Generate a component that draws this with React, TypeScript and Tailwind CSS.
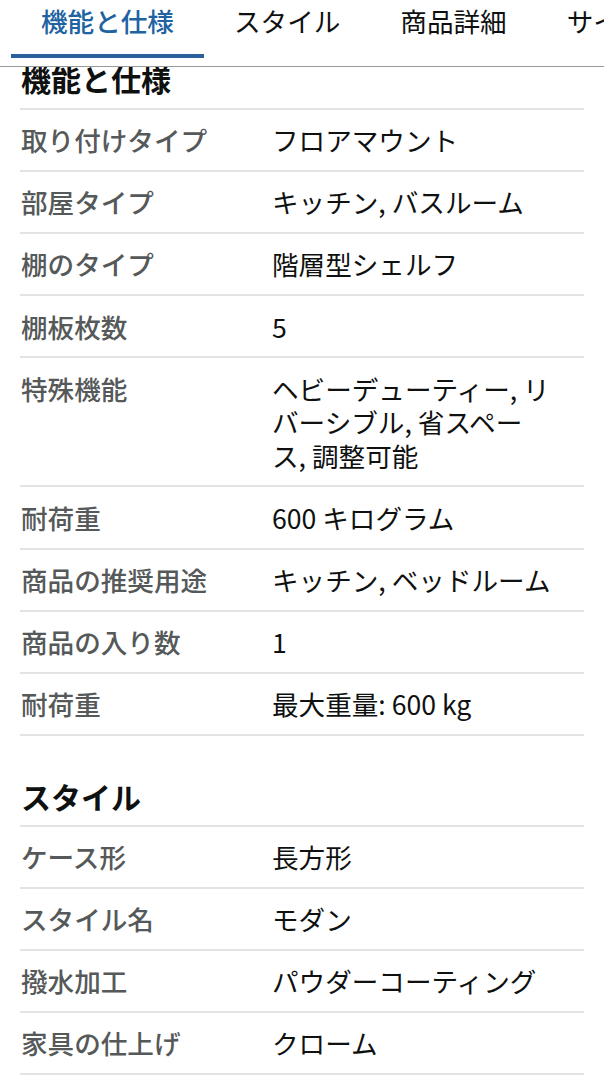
import React from "react";

const tabs = ["機能と仕様", "スタイル", "商品詳細", "サイズ"];

const specs: [string, string][] = [
  ["取り付けタイプ", "フロアマウント"],
  ["部屋タイプ", "キッチン, バスルーム"],
  ["棚のタイプ", "階層型シェルフ"],
  ["棚板枚数", "5"],
  ["特殊機能", "ヘビーデューティー, リバーシブル, 省スペース, 調整可能"],
  ["耐荷重", "600 キログラム"],
  ["商品の推奨用途", "キッチン, ベッドルーム"],
  ["商品の入り数", "1"],
  ["耐荷重", "最大重量: 600 kg"],
];

const style: [string, string][] = [
  ["ケース形", "長方形"],
  ["スタイル名", "モダン"],
  ["撥水加工", "パウダーコーティング"],
  ["家具の仕上げ", "クローム"],
];

function Row({ label, value }: { label: string; value: string }) {
  return (
    <div className="flex border-b-2 border-[#e3e3e3] py-[13.3px] text-[26.6px] leading-[33.5px]">
      <div className="w-[252px] shrink-0 pl-px font-medium text-[#565959]">{label}</div>
      <div className="w-[282px] text-[#0f1111]">{value}</div>
    </div>
  );
}

export default function App() {
  return (
    <div
      className="w-[604px] h-[1080px] overflow-hidden bg-white"
      style={{ fontFamily: '"Noto Sans CJK JP", "Noto Sans", sans-serif' }}
    >
      <div className="sticky top-0 z-10 h-[67px] bg-white border-b border-[#9a9a9a] flex whitespace-nowrap overflow-hidden pl-[11px]">
        {tabs.map((t, i) => (
          <div key={t} className="flex flex-col shrink-0">
            <div
              className={`px-[30px] pt-[4px] pb-[16px] text-[26.6px] leading-[34px] ${
                i === 0 ? "text-[#2162a1] font-medium" : "text-[#0f1111]"
              }`}
            >
              {t}
            </div>
            <div className={`h-[4px] ${i === 0 ? "bg-[#2a619c]" : ""}`} />
          </div>
        ))}
      </div>
      <div className="-mt-[9px] mx-5">
        <div className="border-b-2 border-[#e3e3e3] pb-[10px] text-[30px] leading-[40px] font-bold text-[#0f1111] pl-px">
          機能と仕様
        </div>
        {specs.map(([l, v], i) => (
          <Row key={i} label={l} value={v} />
        ))}
        <div className="mt-[40px] border-b-2 border-[#e3e3e3] pb-[9px] text-[30px] leading-[40px] font-bold text-[#0f1111] pl-px">
          スタイル
        </div>
        {style.map(([l, v], i) => (
          <Row key={i} label={l} value={v} />
        ))}
      </div>
    </div>
  );
}
